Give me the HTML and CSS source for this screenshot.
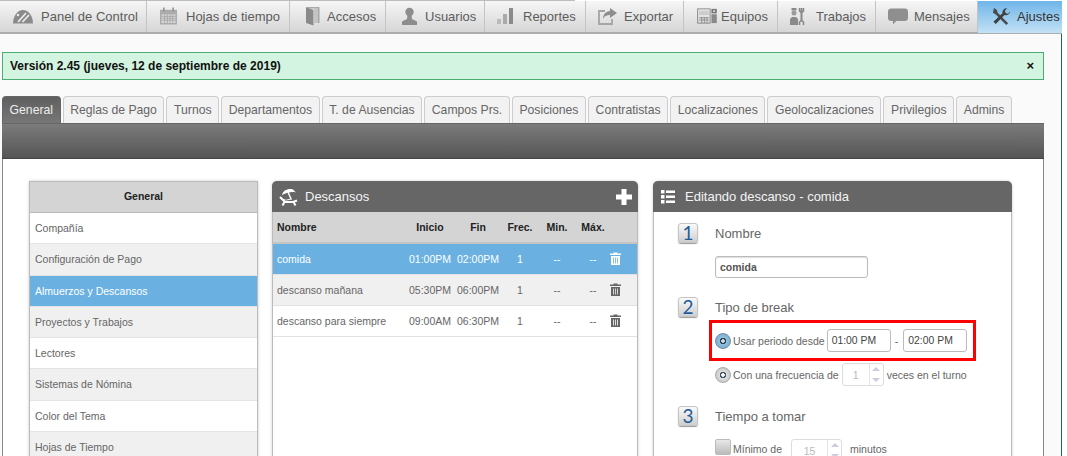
FILE: index.html
```html
<!DOCTYPE html>
<html lang="es">
<head>
<meta charset="utf-8">
<title>Ajustes</title>
<link rel="stylesheet" href="styles.css">
</head>
<body>
<div class="page">
  <div class="topline"><span></span></div>
  <nav class="nav">
    <a class="nav-item n1"><svg width="20" height="15" viewBox="0 0 20 15"><path d="M0 14.500C0 7 4.500 1 10 1s10 6 10 13.500z" fill="#8b8b8b"/><path d="M5 13 13 4M9.500 13 16 6" stroke="#eee" stroke-width="1.600"/><circle cx="5" cy="6" r="1.200" fill="#eee"/></svg>Panel de Control</a>
    <a class="nav-item n2"><svg width="17" height="18" viewBox="0 0 22 22"><rect x="0" y="3" width="22" height="19" fill="#ababab"/><rect x="2" y="9" width="18" height="11" fill="#dadada"/><path d="M2 11.500h18M2 14h18M2 16.500h18M6 9v11M9.500 9v11M13 9v11M16.500 9v11" stroke="#a0a0a0" stroke-width="1"/><path d="M5 0v5M17 0v5" stroke="#8e8e8e" stroke-width="2"/></svg>Hojas de tiempo</a>
    <a class="nav-item n3"><svg width="14" height="20" viewBox="0 0 14 20"><path d="M0 1h13.500v16H12V2.500H4z" fill="#a8a8a8"/><path d="M0 1l7.500 3v15.500L0 17z" fill="#8a8a8a"/><rect x="7.500" y="2.500" width="4.500" height="14.500" fill="#c4c4c4"/></svg>Accesos</a>
    <a class="nav-item n4"><svg width="15" height="18" viewBox="0 0 15 18"><circle cx="7.500" cy="5" r="4.200" fill="#8d8d8d"/><path d="M5.500 8h4l.5 4 5 2.500V18H0v-3.500L5 12z" fill="#8d8d8d"/></svg>Usuarios</a>
    <a class="nav-item n5"><svg width="16" height="18" viewBox="0 0 16 18"><rect x="0" y="12" width="4" height="5" fill="#bbb"/><rect x="6" y="7" width="4" height="10" fill="#aaa"/><rect x="12" y="1" width="4" height="16" fill="#8a8a8a"/></svg>Reportes</a>
    <a class="nav-item n6"><svg width="20" height="18" viewBox="0 0 20 18"><path d="M7 4H1v13h13v-5" fill="none" stroke="#a5a5a5" stroke-width="1.800"/><path d="M12 1l7 5-7 5V8C9 8 6 9 5 12c0-5 3-7.500 7-8z" fill="#8e8e8e"/></svg>Exportar</a>
    <a class="nav-item n7"><svg width="20" height="16" viewBox="0 0 22 18"><rect x="0.500" y="1" width="14" height="16" fill="none" stroke="#808080"/><rect x="2" y="3" width="11" height="5" fill="#ccc"/><path d="M2 11h11M2 13.500h11M5 10v7M8 10v7M11 10v7" stroke="#8a8a8a"/><rect x="16" y="1" width="6" height="5" fill="#777"/><rect x="16" y="7" width="6" height="10" fill="#8a8a8a"/><rect x="18" y="2.500" width="2" height="2" fill="#ddd"/></svg>Equipos</a>
    <a class="nav-item n8"><svg width="16" height="19" viewBox="0 0 16 19"><rect x="2.500" y="1" width="5" height="2.500" fill="#8a8a8a"/><circle cx="5" cy="6" r="2.500" fill="#9a9a9a"/><path d="M1 18v-6l2-2h4l2 2v6z" fill="#8a8a8a"/><path d="M12.500 1v5M12.500 6v8" stroke="#888" stroke-width="2"/><path d="M10.500 1v3l2 1.500 2-1.500V1M10.500 18v-3l2-1.500 2 1.500v3" fill="none" stroke="#888" stroke-width="1.500"/></svg>Trabajos</a>
    <a class="nav-item n9"><svg width="20" height="17" viewBox="0 0 24 19"><path d="M4 0h16a4 4 0 0 1 4 4v7a4 4 0 0 1-4 4H10l-4 4v-4H4a4 4 0 0 1-4-4V4a4 4 0 0 1 4-4z" fill="#8f8f8f"/></svg>Mensajes</a>
    <a class="nav-item n10"><svg width="19" height="19" viewBox="0 0 20 20"><path d="M2 1l3 2 1 3 11 11-2 2L4 8 1 6z" fill="#4a4a4a"/><path d="M19 4.500a4.500 4.500 0 0 1-6 4L4 18l-2.500-2.500 9.500-9a4.500 4.500 0 0 1 5-5.200l-2.500 2.700 1 2.500 2.500.6z" fill="#3f3f3f"/></svg>Ajustes</a>
  </nav>
  <main class="main">
    <div class="alert"><strong>Versión 2.45 (jueves, 12 de septiembre de 2019)</strong><b class="close">×</b></div>
    <div class="tabs">
      <a class="tab active">General</a>
      <a class="tab">Reglas de Pago</a>
      <a class="tab">Turnos</a>
      <a class="tab">Departamentos</a>
      <a class="tab">T. de Ausencias</a>
      <a class="tab">Campos Prs.</a>
      <a class="tab">Posiciones</a>
      <a class="tab">Contratistas</a>
      <a class="tab">Localizaciones</a>
      <a class="tab">Geolocalizaciones</a>
      <a class="tab">Privilegios</a>
      <a class="tab">Admins</a>
    </div>
    <div class="band"></div>
    <div class="content">
      <section class="side">
        <h3 class="side-head">General</h3>
        <a class="side-row">Compañía</a>
        <a class="side-row alt">Configuración de Pago</a>
        <a class="side-row on">Almuerzos y Descansos</a>
        <a class="side-row alt">Proyectos y Trabajos</a>
        <a class="side-row">Lectores</a>
        <a class="side-row alt">Sistemas de Nómina</a>
        <a class="side-row">Color del Tema</a>
        <a class="side-row alt">Hojas de Tiempo</a>
      </section>
      <section class="panel mid">
        <header class="panel-head">
          <svg class="h-ico" width="20" height="18" viewBox="0 0 20 18"><path d="M3 7C4 2.500 9 0 14 1.500l3 3C13 3.500 8 4.500 3 7z" fill="#fff"/><path d="M9 4l3 7" stroke="#fff" stroke-width="1.500"/><path d="M1 9l5 5h8l4-1.500M14.500 14l2 3.500M5.500 14l-2 3.500" fill="none" stroke="#fff" stroke-width="2"/><path d="M2 11l5 1 6-1" stroke="#fff" stroke-width="1"/></svg>
          <span>Descansos</span>
          <svg class="plus" width="16" height="16" viewBox="0 0 16 16"><path d="M5.500 0h5v5.500H16v5h-5.500V16h-5v-5.500H0v-5h5.500z" fill="#fff"/></svg>
        </header>
        <table class="grid">
          <colgroup><col class="c-name"><col class="c-ini"><col class="c-fin"><col class="c-fre"><col class="c-min"><col class="c-max"><col></colgroup>
          <thead><tr><th class="l">Nombre</th><th>Inicio</th><th>Fin</th><th>Frec.</th><th>Min.</th><th>Máx.</th><th></th></tr></thead>
          <tbody>
            <tr class="on"><td class="l">comida</td><td>01:00PM</td><td>02:00PM</td><td>1</td><td>--</td><td>--</td><td><svg class="trash" width="11" height="13" viewBox="0 0 11 13"><path d="M3.500 1.500V.5h4v1H11v1.500H0V1.500zM1 4h9v9H1z" fill="currentColor"/><path d="M3.500 5.500v6M5.500 5.500v6M7.500 5.500v6" stroke="#6ab1e1" stroke-width=".8"/></svg></td></tr>
            <tr class="alt"><td class="l">descanso mañana</td><td>05:30PM</td><td>06:00PM</td><td>1</td><td>--</td><td>--</td><td><svg class="trash" width="11" height="13" viewBox="0 0 11 13"><path d="M3.500 1.500V.5h4v1H11v1.500H0V1.500zM1 4h9v9H1z" fill="currentColor"/><path d="M3.500 5.500v6M5.500 5.500v6M7.500 5.500v6" stroke="#f0f0f0" stroke-width=".8"/></svg></td></tr>
            <tr><td class="l">descanso para siempre</td><td>09:00AM</td><td>06:30PM</td><td>1</td><td>--</td><td>--</td><td><svg class="trash" width="11" height="13" viewBox="0 0 11 13"><path d="M3.500 1.500V.5h4v1H11v1.500H0V1.500zM1 4h9v9H1z" fill="currentColor"/><path d="M3.500 5.500v6M5.500 5.500v6M7.500 5.500v6" stroke="#fff" stroke-width=".8"/></svg></td></tr>
          </tbody>
        </table>
      </section>
      <section class="panel edit">
        <header class="panel-head">
          <svg class="h-ico list" width="14" height="14" viewBox="0 0 14 14"><path d="M0 0h3.500v3.500H0zM5 .5h9V3H5zM0 5h3.500v3.500H0zM5 5.500h9V8H5zM0 10h3.500v3.500H0zM5 10.500h9V13H5z" fill="#fff"/></svg>
          <span>Editando descanso - comida</span>
        </header>
        <div class="form">
          <div class="step s1"><span class="num">1</span><span class="step-label">Nombre</span></div>
          <div class="name-box">comida</div>
          <div class="step s2"><span class="num">2</span><span class="step-label">Tipo de break</span></div>
          <div class="highlight">
            <span class="radio checked"></span>
            <span class="opt">Usar periodo desde</span>
            <span class="time">01:00 PM</span>
            <span class="dash">-</span>
            <span class="time">02:00 PM</span>
          </div>
          <div class="opt-row">
            <span class="radio"></span>
            <span class="opt">Con una frecuencia de</span>
            <span class="spin"><span class="spin-val">1</span><span class="spin-btns"><i class="up"></i><i class="down"></i></span></span>
            <span class="opt">veces en el turno</span>
          </div>
          <div class="step s3"><span class="num">3</span><span class="step-label">Tiempo a tomar</span></div>
          <div class="opt-row min-row">
            <span class="check"></span>
            <span class="opt">Mínimo de</span>
            <span class="spin wide"><span class="spin-val">15</span><span class="spin-btns"><i class="up"></i><i class="down"></i></span></span>
            <span class="opt">minutos</span>
          </div>
        </div>
      </section>
    </div>
  </main>
</div>
</body>
</html>
```
FILE: styles.css
```css
* { box-sizing: border-box; }
html, body { margin: 0; height: 456px; overflow: hidden; background: #fff; }
body { font-family: "Liberation Sans", Arial, sans-serif; color: #666; }
.page { width: 1062px; }
.topline { height: 1px; }
.topline span { display: block; width: 575px; height: 1px; background: #bdbdbd; }

.nav {
  display: grid;
  grid-template-columns: 147px 143px 96px 99px 101px 98px 94px 98px 102px 84px;
  height: 33px;
  background: linear-gradient(#f6f6f6, #d6d6d6);
  border-bottom: 2px solid #adadad;
}
.nav-item {
  display: flex;
  align-items: center;
  font-size: 13px;
  white-space: nowrap;
  color: #5c5c5c;
  border-right: 1px solid #c4c4c4;
  padding-bottom: 1px;
}
.nav-item svg { flex: none; }
.n1 { padding-left: 13px; gap: 8px; }
.n2 { padding-left: 13px; gap: 9px; }
.n3 { padding-left: 16px; gap: 7px; }
.n4 { padding-left: 16px; gap: 8px; }
.n5 { padding-left: 12px; gap: 10px; }
.n6 { padding-left: 12px; gap: 6px; }
.n7 { padding-left: 13px; gap: 4px; }
.n8 { padding-left: 11px; gap: 11px; }
.n9 { padding-left: 12px; gap: 6px; }
.n10 { padding-left: 14px; gap: 6px; color: #333; border-right: 0; background: linear-gradient(#6fb5e8, #c3e2f6); margin-bottom: -1px; }

.main {
  background: #fafafa;
  border-right: 1px solid #1d5f86;
  padding: 18px 17px 0 2px;
}
.alert {
  display: flex;
  justify-content: space-between;
  align-items: center;
  height: 28px;
  background: #d3f4e0;
  border: 1px solid #4bae6f;
  padding: 0 9px 0 7px;
  font-size: 12px;
  color: #111;
}
.close { font-size: 13px; line-height: 1; padding-bottom: 2px; }

.tabs { display: flex; gap: 2px; margin-top: 16px; height: 27px; }
.tab {
  display: flex;
  align-items: center;
  padding: 0 6.600px;
  font-size: 12.200px;
  white-space: nowrap;
  color: #666;
  background: #f2f2f2;
  border: 1px solid #cdcdcd;
  border-bottom: 0;
  border-radius: 4px 4px 0 0;
}
.tab.active { background: linear-gradient(#5f5f5f, #777); border-color: #666; color: #eee; }
.band { height: 36px; background: linear-gradient(#7b7b7b, #555); border-top: 1px solid #666; border-bottom: 1px solid #444; }

.content {
  display: flex;
  align-items: flex-start;
  gap: 14px;
  height: 300px;
  background: #fff;
  border: 1px solid #888;
  border-width: 0 1px;
  padding: 22px 0 0 26px;
}

.side {
  width: 229px;
  flex: none;
  border: 1px solid #bbb;
  border-bottom: 0;
  box-shadow: 0 0 3px #ccc;
}
.side-head {
  margin: 0;
  height: 31px;
  line-height: 29px;
  text-align: center;
  font-size: 10.500px;
  color: #222;
  background: #d4d4d4;
  border-bottom: 1px solid #bbb;
}
.side-row {
  display: flex;
  align-items: center;
  height: 31.250px;
  padding-left: 5px;
  font-size: 10.500px;
  color: #666;
  background: #fff;
  border-bottom: 1px solid #e4e4e4;
}
.side-row.alt { background: #f0f0f0; }
.side-row.on { background: #6ab1e1; color: #fff; }

.panel {
  flex: none;
  border: 1px solid #bbb;
  border-top: 0;
  border-radius: 5px 5px 0 0;
  height: 290px;
  background: #fff;
  box-shadow: 0 0 3px #ccc;
}
.mid { width: 366px; }
.edit { width: 359px; margin-left: 1px; }
.panel-head {
  display: flex;
  align-items: center;
  height: 31px;
  margin: 0 -1px;
  padding: 0 6px 0 7px;
  background: #666;
  color: #f4f4f4;
  font-size: 13px;
  border-radius: 5px 5px 0 0;
}
.h-ico { margin-right: 6px; }
.list { margin-right: 10px; margin-left: 1px; }
.plus { margin-left: auto; }

.grid { width: 100%; table-layout: fixed; border-collapse: collapse; font-size: 10.500px; text-align: center; }
.c-name { width: 132px; }
.c-ini { width: 50px; }
.c-fin { width: 46px; }
.c-fre { width: 38px; }
.c-min { width: 36px; }
.c-max { width: 36px; }
.grid th { height: 31px; background: #d4d4d4; color: #222; border-bottom: 2px solid #c4c4c4; font-size: 10.500px; padding: 0; }
.grid td { height: 31px; padding: 0; border-bottom: 1px solid #e2e2e2; color: #666; }
.grid .l { text-align: left; padding-left: 4px; }
.grid tr.on td { background: #6ab1e1; color: #fff; }
.grid tr.alt td { background: #f0f0f0; }
.trash { display: block; margin-left: -1px; color: #666; }
.on .trash { color: #fff; }

.form { padding: 11px 0 0 24px; }
.step { display: flex; align-items: center; gap: 17px; height: 20px; }
.num {
  width: 20px;
  height: 20px;
  border: 1px solid #c4c4c4;
  border-radius: 3px;
  background: linear-gradient(#fafafa, #cfcfcf);
  color: #1f5c9c;
  font: 19px/18px "Lato", sans-serif;
  text-align: center;
  box-shadow: 0 1px 1px #999;
}
.step-label { font-size: 13px; color: #666; }
.name-box {
  width: 153px;
  height: 22px;
  margin: 13px 0 0 37px;
  padding-left: 4px;
  border: 1px solid #bbb;
  border-radius: 3px;
  font-size: 10.500px;
  font-weight: bold;
  line-height: 20px;
  color: #555;
  box-shadow: inset 0 1px 1px #ddd;
}
.s2 { margin-top: 19px; }
.highlight {
  display: flex;
  align-items: center;
  width: 267px;
  height: 41px;
  margin: 3px 0 0 31px;
  padding-left: 3px;
  border: 3px solid #f00;
}
.radio {
  flex: none;
  width: 16px;
  height: 16px;
  border-radius: 50%;
  border: 1px solid #aaa;
  background: radial-gradient(circle, #fff 0 1.500px, #456 2px 3px, #ddd 3.500px, #bbb);
  margin-right: 2px;
}
.radio.checked { background: radial-gradient(circle, #cde 0 1.500px, #345 2px 3px, #8fc0dc 3.500px, #6ba6c8); border-color: #78a; }
.opt { font-size: 10.500px; color: #666; white-space: nowrap; }
.time {
  display: flex;
  align-items: center;
  flex: none;
  width: 64px;
  height: 23px;
  margin-left: 2px;
  padding-left: 4px;
  border: 1px solid #bbb;
  border-radius: 3px;
  font-size: 10.400px;
  color: #444;
  background: #fff;
}
.dash { font-size: 11px; margin-left: 4px; margin-right: 5px; }
.dash + .time { margin-left: 0; }
.opt-row { display: flex; align-items: center; height: 23px; margin: 2px 0 0 37px; }
.spin {
  display: flex;
  flex: none;
  width: 42px;
  height: 23px;
  margin: 0 3px;
  border: 1px solid #ddd;
  border-radius: 3px;
  color: #bbb;
  font-size: 10.500px;
}
.spin.wide { width: 51px; margin: 0 8px 0 9px; }
.spin-val { flex: 1; text-align: center; line-height: 23px; }
.spin-btns { display: flex; flex-direction: column; width: 14px; border-left: 1px solid #e4e4e4; }
.spin-btns i { flex: 1; display: flex; align-items: center; justify-content: center; }
.spin-btns i::before { content: ""; border: 4px solid transparent; }
.up::before { border-bottom-color: #ccd !important; border-top-width: 0 !important; }
.down::before { border-top-color: #ccd !important; border-bottom-width: 0 !important; }
.s3 { margin-top: 20px; }
.min-row { margin-top: 13px; align-items: flex-start; }
.check {
  width: 16px;
  height: 16px;
  flex: none;
  border: 1px solid #bbb;
  border-radius: 2px;
  background: linear-gradient(#e8e8e8, #bbb);
  margin-right: 2px;
}
.min-row .opt { line-height: 20px; }
```
